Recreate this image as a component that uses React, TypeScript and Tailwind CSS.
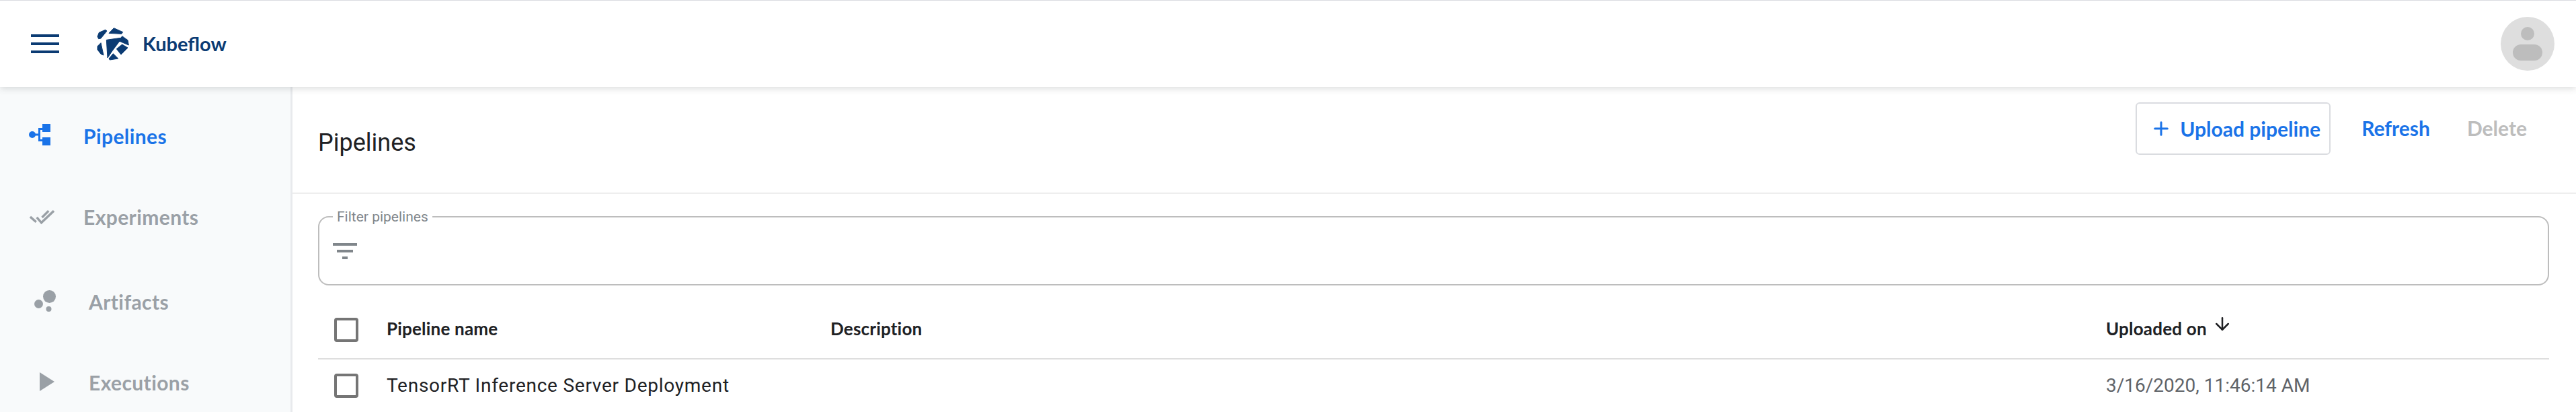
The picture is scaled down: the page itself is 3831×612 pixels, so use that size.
import { ArrowDown, Plus } from "lucide-react";

const BLUE = "#1a73e8";

function KubeflowLogo() {
  return (
    <svg viewBox="0 0 168 168" className="w-[56px] h-[56px] shrink-0" fill="#0b3b73" stroke="#0b3b73" strokeWidth="3" strokeLinejoin="round">
      <polygon points="15,52 22,34 50,22 57,27 30,60 20,62" />
      <polygon points="66,37 88,14 128,32 122,40" />
      <polygon points="55,67 125,57 80,117 60,147" />
      <polygon points="125,50 150,68 154,90 112,72" />
      <polygon points="100,107 125,87 150,102 120,132" />
      <polygon points="66,150 85,128 107,150 70,156" />
      <polygon points="15,95 30,80 42,135 30,130 15,110" />
    </svg>
  );
}

function PipelinesIcon() {
  return (
    <svg viewBox="0 0 32 32" className="w-[32px] h-[32px]" fill={BLUE}>
      <circle cx="5" cy="16" r="5" />
      <rect x="8" y="14.5" width="8" height="3" />
      <rect x="14" y="6" width="3" height="20" />
      <rect x="14" y="6" width="8" height="3" />
      <rect x="14" y="23" width="8" height="3" />
      <rect x="20" y="0" width="12" height="12" />
      <rect x="20" y="20" width="12" height="12" />
    </svg>
  );
}

function ExperimentsIcon() {
  return (
    <svg viewBox="0 0 38 23" className="w-[38px] h-[23px]" fill="none" stroke="#9aa0a6" strokeWidth="3.5">
      <path d="M1 11 L10 19" />
      <path d="M11 12 L18 20 L37 2" />
      <path d="M19 12 L29 2" />
    </svg>
  );
}

function ArtifactsIcon() {
  return (
    <svg viewBox="0 0 32 32" className="w-[32px] h-[32px]" fill="#9aa0a6">
      <circle cx="22.5" cy="9.5" r="9.5" />
      <circle cx="6.5" cy="20.5" r="6.5" />
      <circle cx="21.5" cy="28" r="4" />
    </svg>
  );
}

function ExecutionsIcon() {
  return (
    <svg viewBox="0 0 22 28" className="w-[22px] h-[28px]" fill="#9aa0a6">
      <polygon points="0,0 22,14 0,28" />
    </svg>
  );
}

function FilterIcon() {
  return (
    <svg viewBox="0 0 36 24" className="w-[36px] h-[24px]" fill="#80868b">
      <rect x="0" y="0" width="36" height="4" />
      <rect x="6" y="10" width="24" height="4" />
      <rect x="14" y="20" width="8" height="4" />
    </svg>
  );
}

const NAV = [
  { label: "Pipelines", icon: PipelinesIcon, iconBox: "w-[81px] pl-[43px] -mt-[4px]", rowH: "h-[128px]", active: true },
  { label: "Experiments", icon: ExperimentsIcon, iconBox: "w-[81px] pl-[44px]", rowH: "h-[112px]", active: false },
  { label: "Artifacts", icon: ArtifactsIcon, iconBox: "w-[89px] pl-[51px] -mt-[3px]", rowH: "h-[140px]", active: false },
  { label: "Executions", icon: ExecutionsIcon, iconBox: "w-[89px] pl-[59px] -mt-[2px]", rowH: "h-[100px]", active: false },
];

function Checkbox() {
  return <div className="w-[36px] h-[36px] rounded-[4px] border-[4px] border-[#757575] bg-white" />;
}

export default function App() {
  return (
    <div className="w-[3831px] h-[612px] overflow-hidden bg-white flex flex-col font-['Roboto',sans-serif]">
      {/* Top bar */}
      <header className="relative z-10 h-[129px] shrink-0 flex items-center bg-white border-t border-[#dadce0] shadow-[0_2px_10px_rgba(60,64,67,0.2)] pl-[46px] pr-[32px]">
        <div className="w-[42px] flex flex-col gap-[8px] mr-[52px]">
          <div className="h-[4px] bg-[#0b3b73]" />
          <div className="h-[4px] bg-[#0b3b73]" />
          <div className="h-[4px] bg-[#0b3b73]" />
        </div>
        <KubeflowLogo />
        <span className="ml-[16px] text-[29px] font-bold text-[#0b3b73] font-['Lato',sans-serif]">Kubeflow</span>
        <div className="ml-auto w-[80px] h-[80px] rounded-full bg-[#dedede] flex flex-col items-center justify-center gap-[6px]">
          <div className="w-[20px] h-[20px] rounded-full bg-[#bdbdbd]" />
          <div className="w-[44px] h-[24px] rounded-full bg-[#bdbdbd]" />
        </div>
      </header>

      <div className="flex flex-1 min-h-0">
        {/* Side nav */}
        <aside className="w-[435px] shrink-0 bg-[#f8fafb] border-r-[3px] border-[#e8eaed] pt-[9px]">
          {NAV.map((item) => {
            const Icon = item.icon;
            return (
              <div key={item.label} className={`flex items-center ${item.rowH}`}>
                <div className={`${item.iconBox} shrink-0 flex items-center`}>
                  <Icon />
                </div>
                <span className={`text-[30px] tracking-[0.4px] font-bold font-['Lato',sans-serif] ml-[43px] ${item.active ? "text-[#1a73e8]" : "text-[#9aa0a6]"}`}>
                  {item.label}
                </span>
              </div>
            );
          })}
        </aside>

        {/* Main */}
        <main className="flex-1 min-w-0">
          <div className="h-[159px] border-b-2 border-[#eeeeee] flex items-start pl-[38px] pr-[73px] pt-[23px]">
            <h1 className="text-[36px] leading-[60px] font-normal text-[#202124] mt-[30px]">Pipelines</h1>
            <div className="ml-auto flex items-start font-['Lato',sans-serif] font-bold text-[30px]">
              <button className="h-[78px] w-[290px] rounded-[6px] border-2 border-[#dadce0] flex items-center pl-[20px] text-[#1a73e8]">
                <Plus className="w-[32px] h-[32px] mr-[12px]" strokeWidth={2.25} />
                Upload pipeline
              </button>
              <span className="ml-[46px] mt-[16px] text-[#1a73e8]">Refresh</span>
              <span className="ml-[55px] mt-[16px] text-[#bdbdbd]">Delete</span>
            </div>
          </div>

          <div className="pl-[38px] pr-[40px] pt-[33px]">
            {/* Filter box */}
            <div className="relative h-[103px] border-2 border-[#bdbdbd] rounded-[16px] flex items-center pl-[20px]">
              <span className="absolute left-[20px] -top-[13px] bg-white px-[6px] text-[21px] leading-[24px] text-[#80868b]">Filter pipelines</span>
              <FilterIcon />
            </div>

            {/* Table header */}
            <div className="h-[110px] pt-[20px] flex items-center border-b-2 border-[#dedede] font-['Lato',sans-serif] font-bold text-[26px] tracking-[0.2px] text-[#202124]">
              <div className="w-[102px] pl-[24px] pt-[4px] shrink-0"><Checkbox /></div>
              <div className="w-[660px] shrink-0">Pipeline name</div>
              <div className="w-[1897px] shrink-0">Description</div>
              <div className="flex items-center">
                Uploaded on
                <ArrowDown className="w-[30px] h-[30px] ml-[8px] -mt-[14px]" strokeWidth={2} />
              </div>
            </div>

            {/* Row */}
            <div className="h-[78px] flex items-center">
              <div className="w-[102px] pl-[24px] shrink-0"><Checkbox /></div>
              <div className="w-[2557px] shrink-0 text-[28px] tracking-[0.75px] text-[#202124]">TensorRT Inference Server Deployment</div>
              <div className="text-[28px] text-[#5f6368]">3/16/2020, 11:46:14 AM</div>
            </div>
          </div>
        </main>
      </div>
    </div>
  );
}
